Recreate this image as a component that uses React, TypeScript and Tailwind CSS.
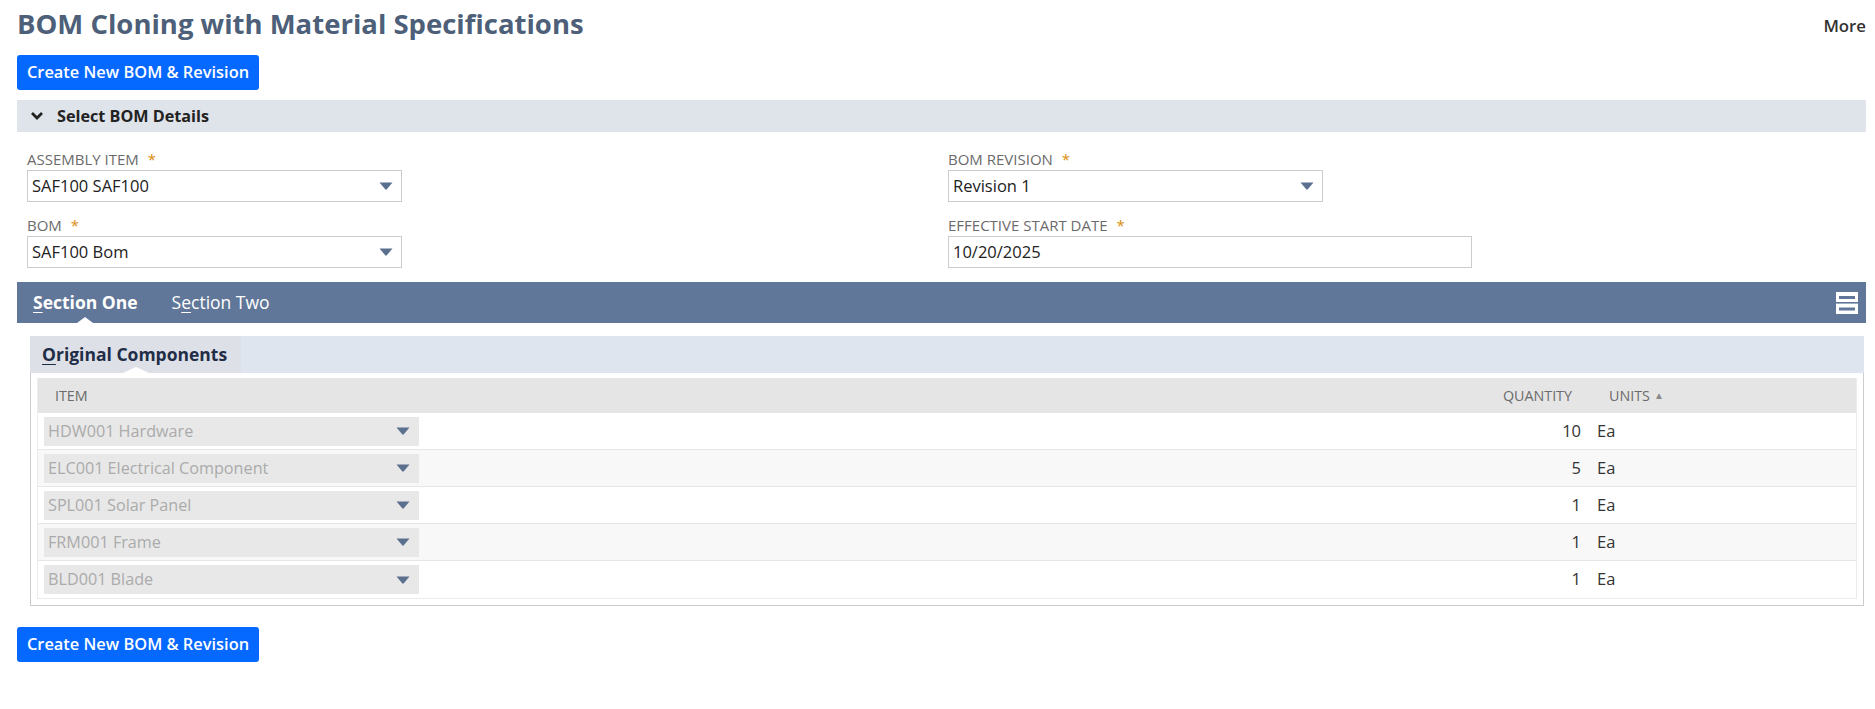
import React from "react";

const Arrow = ({ className = "" }: { className?: string }) => (
  <svg width="14" height="8" viewBox="0 0 14 8" className={className}>
    <path d="M0.5 0.5 L13.5 0.5 L7.8 7.3 Q7 8 6.2 7.3 Z" fill="#5b6f8f" />
  </svg>
);

const Label = ({ text }: { text: string }) => (
  <div className="h-[20px] text-[15px] leading-[18px] uppercase text-[#6b6b6b] whitespace-nowrap">
    {text}
    <span className="ml-[9px] text-[#dc8c0b]">*</span>
  </div>
);

const SelectBox = ({ value, w = "w-[375px]" }: { value: string; w?: string }) => (
  <div className={`${w} h-[32px] border border-[#cccccc] bg-white flex items-center justify-between pl-[4px] pr-[8px] text-[16.5px] text-[#222]`}>
    <span>{value}</span>
    <Arrow />
  </div>
);

const rows = [
  { item: "HDW001 Hardware", qty: "10" },
  { item: "ELC001 Electrical Component", qty: "5" },
  { item: "SPL001 Solar Panel", qty: "1" },
  { item: "FRM001 Frame", qty: "1" },
  { item: "BLD001 Blade", qty: "1" },
];

const BlueButton = () => (
  <button className="h-[35px] w-[242px] rounded-[3px] bg-[#0669ff] text-white text-[16.4px] font-semibold flex items-center justify-center">
    Create New BOM &amp; Revision
  </button>
);

export default function App() {
  return (
    <div className="min-h-screen bg-white font-['Open_Sans',sans-serif] pl-[17px] pr-[9px] pb-[40px]">
      <div className="flex justify-between items-start">
        <h1 className="mt-[7px] h-[34px] text-[27.5px] leading-[34px] font-bold text-[#4d5f79] whitespace-nowrap">
          BOM Cloning with Material Specifications
        </h1>
        <span className="mt-[14px] text-[16.8px] leading-[24px] text-[#333] font-semibold">More</span>
      </div>

      <div className="mt-[14px]">
        <BlueButton />
      </div>

      <div className="mt-[10px] h-[32px] bg-[#dfe3ea] flex items-center">
        <svg width="14" height="10" viewBox="0 0 14 10" className="ml-[13px]">
          <polyline points="2,2 7,7 12,2" fill="none" stroke="#222" strokeWidth="2.8" />
        </svg>
        <span className="ml-[13px] text-[16.2px] font-bold text-[#222]">Select BOM Details</span>
      </div>

      <div className="mt-[18px] pl-[10px] flex">
        <div className="w-[921px] flex flex-col gap-[14px]">
          <div>
            <Label text="Assembly Item" />
            <SelectBox value="SAF100 SAF100" />
          </div>
          <div>
            <Label text="BOM" />
            <SelectBox value="SAF100 Bom" />
          </div>
        </div>
        <div className="flex flex-col gap-[14px]">
          <div>
            <Label text="BOM Revision" />
            <SelectBox value="Revision 1" />
          </div>
          <div>
            <Label text="Effective Start Date" />
            <div className="w-[524px] h-[32px] border border-[#cccccc] bg-white flex items-center pl-[4px] text-[16.5px] text-[#222]">
              10/20/2025
            </div>
          </div>
        </div>
      </div>

      <div className="mt-[14px] h-[41px] bg-[#607799] flex items-center relative">
        <div className="ml-[16px] relative h-full flex items-center">
          <span className="text-[17.5px] font-bold text-white">
            <span className="underline underline-offset-[3px]">S</span>ection One
          </span>
          <div className="absolute bottom-0 left-1/2 -translate-x-1/2 w-0 h-0 border-l-[8px] border-r-[8px] border-b-[6px] border-l-transparent border-r-transparent border-b-white" />
        </div>
        <span className="ml-[34px] text-[17.5px] text-white">
          S<span className="underline underline-offset-[3px]">e</span>ction Two
        </span>
        <svg width="22" height="22" viewBox="0 0 22 22" className="ml-auto mr-[8px]">
          <rect x="0" y="0" width="22" height="22" fill="#ffffff" />
          <rect x="0" y="10" width="22" height="1.6" fill="#607799" />
          <rect x="3" y="4" width="16" height="3" fill="#607799" />
          <rect x="3" y="15.5" width="16" height="3" fill="#607799" />
        </svg>
      </div>

      <div className="mt-[13px] ml-[13px] mr-[2px]">
        <div className="h-[37px] bg-[#dfe5ee] flex">
          <div className="relative w-[211px] h-full bg-[#dde0e6] flex items-center pl-[12px]">
            <span className="text-[17.5px] font-bold text-[#1f2d47] whitespace-nowrap">
              <span className="underline underline-offset-[3px]">O</span>riginal Components
            </span>
            <div className="absolute bottom-0 left-1/2 -translate-x-1/2 w-0 h-0 border-l-[13px] border-r-[13px] border-b-[6px] border-l-transparent border-r-transparent border-b-white" />
          </div>
        </div>
        <div className="border border-t-0 border-[#cccccc] px-[6px] pt-[5px] pb-[6px]">
          <div className="border border-t-0 border-[#ececec]">
            <div className="h-[35px] bg-[#e5e5e5] flex items-center text-[14.3px] uppercase text-[#6b6b6b]">
              <div className="flex-1 pl-[17px]">Item</div>
              <div className="w-[100px] text-right pr-[16px]">Quantity</div>
              <div className="w-[268px] pl-[21px] flex items-center">
                Units<span className="ml-[4px] text-[10px] text-[#888]">▲</span>
              </div>
            </div>
            {rows.map((r, i) => (
              <div
                key={r.item}
                className={`h-[37px] flex items-center border-b border-[#e6e6e6] last:border-b-0 ${i % 2 === 1 ? "bg-[#f8f8f8]" : "bg-white"}`}
              >
                <div className="flex-1 pl-[6px]">
                  <div className="w-[375px] h-[29px] bg-[#e8e8e8] flex items-center justify-between pl-[4px] pr-[9px] text-[16.2px] text-[#ababab]">
                    <span>{r.item}</span>
                    <Arrow />
                  </div>
                </div>
                <div className="w-[100px] text-right pr-[7px] text-[16.5px] text-[#333]">{r.qty}</div>
                <div className="w-[268px] pl-[9px] text-[16.5px] text-[#333]">Ea</div>
              </div>
            ))}
          </div>
        </div>
      </div>

      <div className="mt-[21px]">
        <BlueButton />
      </div>
    </div>
  );
}
